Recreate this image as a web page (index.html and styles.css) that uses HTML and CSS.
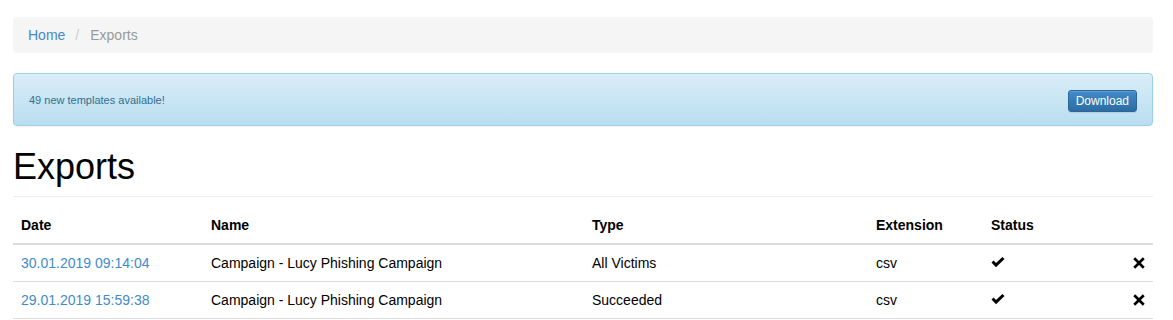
FILE: index.html
```html
<!DOCTYPE html>
<html>
<head>
<meta charset="utf-8">
<link rel="stylesheet" href="styles.css">
</head>
<body>
<div class="page">
  <ol class="breadcrumb">
    <li><a href="#">Home</a></li>
    <li class="sep">/</li>
    <li class="active">Exports</li>
  </ol>

  <div class="alert">
    <span class="alert-text">49 new templates available!</span>
    <button class="btn">Download</button>
  </div>

  <div class="page-header"><h1>Exports</h1></div>

  <table class="table">
    <colgroup>
      <col class="c-date"><col class="c-name"><col class="c-type"><col class="c-ext"><col class="c-status"><col>
    </colgroup>
    <thead>
      <tr><th>Date</th><th>Name</th><th>Type</th><th>Extension</th><th>Status</th><th></th></tr>
    </thead>
    <tbody>
      <tr>
        <td><a href="#">30.01.2019 09:14:04</a></td>
        <td>Campaign - Lucy Phishing Campaign</td>
        <td>All Victims</td>
        <td>csv</td>
        <td><svg class="ic-ok" viewBox="0 0 14 11" width="14" height="11"><path d="M0.5 5.6 L2.6 3.6 L5 6 L11.4 0 L13.5 2 L5 10.3 Z" fill="#000"/></svg></td>
        <td class="right"><svg class="ic-x" viewBox="0 0 12 12" width="12" height="12"><path d="M2.2 0.3 L6 4.1 L9.8 0.3 L11.7 2.2 L7.9 6 L11.7 9.8 L9.8 11.7 L6 7.9 L2.2 11.7 L0.3 9.8 L4.1 6 L0.3 2.2 Z" fill="#000"/></svg></td>
      </tr>
      <tr>
        <td><a href="#">29.01.2019 15:59:38</a></td>
        <td>Campaign - Lucy Phishing Campaign</td>
        <td>Succeeded</td>
        <td>csv</td>
        <td><svg class="ic-ok" viewBox="0 0 14 11" width="14" height="11"><path d="M0.5 5.6 L2.6 3.6 L5 6 L11.4 0 L13.5 2 L5 10.3 Z" fill="#000"/></svg></td>
        <td class="right"><svg class="ic-x" viewBox="0 0 12 12" width="12" height="12"><path d="M2.2 0.3 L6 4.1 L9.8 0.3 L11.7 2.2 L7.9 6 L11.7 9.8 L9.8 11.7 L6 7.9 L2.2 11.7 L0.3 9.8 L4.1 6 L0.3 2.2 Z" fill="#000"/></svg></td>
      </tr>
    </tbody>
  </table>
</div>
</body>
</html>
```

FILE: styles.css
```css
* { box-sizing: border-box; }
html, body { margin: 0; padding: 0; background: #fff; }
body {
  font-family: "Liberation Sans", Arial, Helvetica, sans-serif;
  font-size: 14px;
  line-height: 20px;
  color: #000;
}
a { color: #428bca; text-decoration: none; }
.page {
  width: 1140px;
  margin-left: 13px;
  padding-top: 17px;
}
.breadcrumb {
  display: flex;
  list-style: none;
  margin: 0 0 20px;
  padding: 8px 15px;
  background: #f5f5f5;
  border-radius: 4px;
  height: 36px;
}
.breadcrumb li { line-height: 20px; }
.breadcrumb .sep { color: #ccc; padding: 0 10px 0 10px; }
.breadcrumb .active { color: #999; padding-left: 1px; }

.alert {
  display: flex;
  justify-content: space-between;
  align-items: center;
  height: 53px;
  padding: 0 15px;
  border: 1px solid #9acfea;
  border-radius: 4px;
  background: linear-gradient(to bottom, #d9edf7 0%, #b9def0 100%);
  box-shadow: inset 0 1px 0 rgba(255,255,255,.25), 0 1px 2px rgba(0,0,0,.05);
  margin-bottom: 21px;
}
.alert-text {
  font-size: 11px;
  color: #31708f;
  padding-top: 1px;
}
.btn {
  font-family: "Liberation Sans", Arial, Helvetica, sans-serif;
  font-size: 12px;
  line-height: 18px;
  padding: 1px 7px;
  height: 22px;
  color: #fff;
  border: 1px solid #2b669a;
  border-radius: 3px;
  background: linear-gradient(to bottom, #428bca 0%, #2d6ca2 100%);
  box-shadow: inset 0 1px 0 rgba(255,255,255,.15), 0 1px 1px rgba(0,0,0,.075);
  margin-top: 2px;
}

.page-header {
  border-bottom: 1px solid #eee;
  padding-bottom: 9px;
  margin-bottom: 10px;
}
.page-header h1 {
  margin: 0;
  font-size: 36px;
  font-weight: 500;
  line-height: 40px;
}

.table {
  width: 1140px;
  border-collapse: collapse;
  table-layout: fixed;
}
.c-date { width: 190px; }
.c-name { width: 381px; }
.c-type { width: 284px; }
.c-ext { width: 115px; }
.c-status { width: 120px; }
.table th, .table td {
  padding: 8px;
  text-align: left;
  vertical-align: middle;
  line-height: 20px;
}
.table th {
  font-weight: bold;
  border-bottom: 2px solid #ddd;
}
.table td { border-top: 1px solid #ddd; }
.table tbody tr:last-child td { border-bottom: 1px solid #ddd; }
.table td.right { text-align: right; padding-right: 8px; }
.table svg { display: inline-block; vertical-align: middle; margin-top: -3px; }
```
